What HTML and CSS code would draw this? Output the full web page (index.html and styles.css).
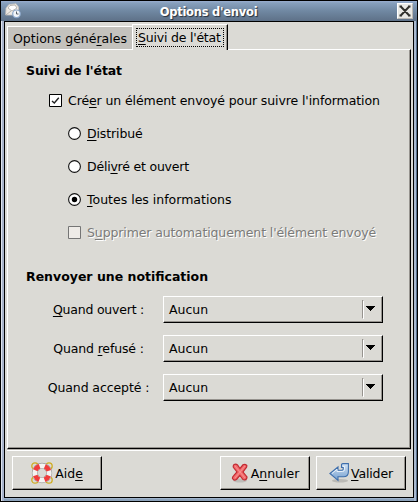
FILE: index.html
```html
<!DOCTYPE html>
<html lang="fr">
<head>
<meta charset="utf-8">
<title>Options d'envoi</title>
<link rel="stylesheet" href="styles.css">
</head>
<body>
<div class="window">
  <header class="titlebar">
    <svg class="app-icon" width="18" height="16" viewBox="0 0 18 16">
      <path d="M1 5 4 1.500 11 .7 13.500 4V12H.7z" fill="#eeeae4" stroke="#c5c3bf" stroke-width=".8"/>
      <path d="M3 5 5 2.500 10 2 12 5 7 8zM1 12 6 8M8 8l3 1" fill="#fff" stroke="#aaa69f" stroke-width=".8"/>
      <circle cx="11.500" cy="10.800" r="3.800" fill="#f4f7fa" stroke="#8ba7ca" stroke-width="1.200"/>
      <path d="M11.500 8.500v2.500h2" fill="none" stroke="#596068"/>
    </svg>
    <h1 class="title">Options d'envoi</h1>
    <button class="close" aria-label="Fermer"><svg width="12" height="12" viewBox="0 0 12 12"><path d="M2 1.800 10 10.200M10 1.800 2 10.200M.5 1.500H3M9 1.500h2.500M.5 10.500H3M9 10.500h2.500" fill="none" stroke="#30302c" stroke-width="2"/></svg></button>
  </header>
  <main class="client">
    <nav class="tabs">
      <div class="tab"><span class="t-general">Options géné<u>r</u>ales</span></div>
      <div class="tab active"><div class="focus"><span class="t-suivi"><u>S</u>uivi de l'état</span></div></div>
    </nav>
    <section class="panel">
      <h2 class="h-suivi">Suivi de l'état</h2>
      <label class="option first"><svg class="mark" width="13" height="13" viewBox="0 0 13 13"><path d="M.5.5h12v12H.5z" fill="#fff" stroke="#000"/><path d="M3 7 5.300 9 9.800 3.800" fill="none" stroke="#222" stroke-width="1.400"/></svg><span class="t-creer">Cré<u>e</u>r un élément envoyé pour suivre l'information</span></label>
      <label class="option"><svg class="mark" width="13" height="13" viewBox="0 0 13 13"><circle cx="6.500" cy="6.500" r="5.900" fill="#fff" stroke="#111" stroke-width="1.100"/></svg><span class="t-dist"><u>D</u>istribué</span></label>
      <label class="option"><svg class="mark" width="13" height="13" viewBox="0 0 13 13"><circle cx="6.500" cy="6.500" r="5.900" fill="#fff" stroke="#111" stroke-width="1.100"/></svg><span class="t-deliv">Déli<u>v</u>ré et ouvert</span></label>
      <label class="option"><svg class="mark" width="13" height="13" viewBox="0 0 13 13"><circle cx="6.500" cy="6.500" r="5.900" fill="#fff" stroke="#111" stroke-width="1.100"/><circle cx="6.500" cy="6.500" r="2.700"/></svg><span class="t-toutes"><u>T</u>outes les informations</span></label>
      <label class="option disabled"><svg class="mark" width="13" height="13" viewBox="0 0 13 13"><path d="M.5.5h12v12H.5z" fill="#eeebe7" stroke="#757575"/></svg><span class="t-suppr">S<u>u</u>pprimer automatiquement l'élément envoyé</span></label>
      <h2 class="h-renv">Renvoyer une notification</h2>
      <div class="fields">
        <span class="name"><span class="t-q1"><u>Q</u>uand ouvert :</span></span>
        <div class="combo"><span>Aucun</span><i class="sep"></i><svg width="9" height="5" viewBox="0 0 9 5" shape-rendering="crispEdges"><path d="M0 0h9v1H8v1H7v1H6v1H5v1H4V4H3V3H2V2H1V1H0z"/></svg></div>
        <span class="name"><span class="t-q2">Quand <u>r</u>efusé :</span></span>
        <div class="combo"><span>Aucun</span><i class="sep"></i><svg width="9" height="5" viewBox="0 0 9 5" shape-rendering="crispEdges"><path d="M0 0h9v1H8v1H7v1H6v1H5v1H4V4H3V3H2V2H1V1H0z"/></svg></div>
        <span class="name"><span class="t-q3">Quand accepté :</span></span>
        <div class="combo"><span>Aucun</span><i class="sep"></i><svg width="9" height="5" viewBox="0 0 9 5" shape-rendering="crispEdges"><path d="M0 0h9v1H8v1H7v1H6v1H5v1H4V4H3V3H2V2H1V1H0z"/></svg></div>
      </div>
    </section>
    <footer class="actions">
      <button class="btn help"><svg width="22" height="22" viewBox="0 0 22 22">
        <g fill="none" stroke="#cfac22" stroke-width="1.300"><circle cx="4" cy="4" r="3.200"/><circle cx="18" cy="4" r="3.200"/><circle cx="4" cy="18" r="3.200"/><circle cx="18" cy="18" r="3.200"/></g>
        <circle cx="11" cy="11" r="7.200" fill="none" stroke="#9a9a98" stroke-width="6"/>
        <circle cx="11" cy="11" r="7.200" fill="none" stroke="#f4f4f2" stroke-width="4.800"/>
        <circle cx="11" cy="11" r="7.200" fill="none" stroke="#f03c3c" stroke-width="4.800" stroke-dasharray="6 5.310" stroke-dashoffset="-2.650"/>
      </svg><span>Aid<u>e</u></span></button>
      <button class="btn cancel"><svg width="18" height="20" viewBox="0 0 18 20">
        <ellipse cx="9" cy="17.500" rx="7" ry="2" fill="#000" opacity=".13"/>
        <path d="M3 1.500Q5 .5 6.500 2L9 5.500 12 1.800Q14 .5 15.800 2.500 16 4 15 5L12 9l4 5q0 2.500-2.500 3L12 16.500 8.800 12.500 5.500 16.500Q3 18 1.500 15.500 1.300 14 2.500 12.800L6 9 2.500 4.500Q1.800 3 3 1.500z" fill="#f26c6e" stroke="#c22a32" stroke-width="1.200"/>
        <path d="M4 3 9 9l5-6M4 15 9 9l5 6" fill="none" stroke="#fa9090" stroke-width="1"/>
      </svg><span>A<u>n</u>nuler</span></button>
      <button class="btn ok"><svg width="21" height="20" viewBox="0 0 21 20">
        <defs><linearGradient id="blue" x2="0" y2="1"><stop offset="0" stop-color="#d5e4f4"/><stop offset="1" stop-color="#749fcf"/></linearGradient></defs>
        <ellipse cx="11" cy="17.800" rx="8" ry="1.800" fill="#000" opacity=".15"/>
        <path d="M12.500 1.500Q13 .6 14 .6h5.400v8.200q0 5-5 5H9v3.500L.9 10.500 9 4v3.200h4q1.200 0 1.200-1.200V4.500h-1.700z" fill="url(#blue)" stroke="#3f6fac" stroke-width="1.100"/>
        <path d="M3 10.500 8 6.300v2.200h5.500q2 0 2-2V3.500H14" fill="none" stroke="#edf5fc" stroke-width=".9"/>
      </svg><span class="t-val"><u>V</u>alider</span></button>
    </footer>
  </main>
</div>
</body>
</html>
```
FILE: styles.css
```css
* { box-sizing: border-box; }
body {
  margin: 0;
  font: 12.5px/17px "DejaVu Sans", sans-serif;
  color: #000;
}
span, h1, h2 { white-space: nowrap; }
u {
  text-decoration: underline;
  text-decoration-thickness: 1px;
  text-underline-offset: 2px;
  text-decoration-skip-ink: none;
}
button { font: inherit; color: inherit; }
.window {
  width: 418px;
  height: 502px;
  border: 1px solid #000;
  background: linear-gradient(90deg, #dfe4ee 0 1px, #a9b4cb 1px 3px, transparent 3px 413px, #a9b9cf 413px 415px, #566f8d 415px), linear-gradient(#a0b4cc 0 498px, #8ca2ba 498px);
  padding: 0 3px 3px;
}
.titlebar {
  display: flex;
  align-items: center;
  height: 20px;
  margin: 0 -3px;
  padding: 0 4px 0 4px;
  background: linear-gradient(#9aaed0 0, #87a0bd 2px, #7088a2 10px, #5e7188 20px);
}
.title {
  flex: 1;
  margin: 0;
  padding-right: 3px;
  padding-top: 1px;
  text-align: center;
  font-size: 11.5px;
  letter-spacing: -.25px;
  line-height: 18px;
  color: #fff;
  text-shadow: 1px 1px 1px #26303c;
}
.close {
  display: grid;
  place-items: center;
  width: 16px;
  height: 16px;
  padding: 0;
  border: 1px solid;
  border-color: #fff #b9b7b2 #b9b7b2 #fff;
  background: #e9e9e5;
}
.client {
  width: 410px;
  height: 477px;
  border: 1px solid #000;
  background: #dbdad5;
  padding: 2px 2px 0;
}
.tabs { display: flex; align-items: flex-end; height: 25px; }
.tab {
  height: 23px;
  width: 125px;
  border: 1px solid #fff;
  border-width: 1px 0 0 1px;
  background: #c4c2bd;
  padding: 3px 5px;
}
.tab.active {
  position: relative;
  width: 96px;
  height: 26px;
  margin-bottom: -1px;
  border-right: 1px solid #000;
  background: #dbdad5;
  box-shadow: inset -1px 0 #96938e;
  padding: 3px;
}
.focus { width: 88px; height: 19px; border: 1px dotted #000; padding-left: 1px; }
.panel {
  width: 404px;
  height: 400px;
  border: 1px solid;
  border-color: #fff #000 #000 #fff;
  box-shadow: inset -1px -1px #96938e, 0 1px #b5b2ad, 0 2px #fff;
  padding: 12px 0 0 18px;
}
h2 { margin: 0; font-size: 12.5px; line-height: 17px; }
.option { display: flex; align-items: center; height: 17px; margin: 16px 0 0 42px; }
.option.first { margin: 13px 0 0 23px; }
.option > span { margin-left: 6px; }
.disabled { color: #7b7b79; text-shadow: 1px 1px #fff; }
.h-renv { margin-top: 27px; }

/* Tracking per label */
.t-suivi, .t-deliv, .t-q1 { letter-spacing: -.21px; }
.t-q2, .t-val { letter-spacing: -.15px; }
.t-dist, .t-suppr, .h-suivi { letter-spacing: -.12px; }
.t-creer, .t-q3 { letter-spacing: -.1px; }

.fields {
  display: grid;
  grid-template-columns: 118px 220px;
  column-gap: 19px;
  row-gap: 12px;
  align-items: center;
  margin-top: 11px;
}
.name { display: flex; justify-content: center; padding-left: 19px; margin-right: -8px; }
.combo {
  display: flex;
  align-items: center;
  height: 27px;
  border: 1px solid;
  border-color: #fff #000 #000 #fff;
  box-shadow: inset -1px -1px #96938e;
  padding: 0 7px 0 5px;
}
.combo span { flex: 1; }
.combo svg { margin-top: -2px; }
.sep { width: 2px; height: 19px; margin-right: 2px; border: 1px solid; border-color: #96938e #fff #fff #96938e; }
.actions { display: flex; height: 34px; margin: 7px 2px 0 5px; }
.btn {
  display: flex;
  align-items: center;
  justify-content: center;
  width: 90px;
  height: 34px;
  border: 1px solid;
  border-color: #fff #000 #000 #fff;
  background: none;
  box-shadow: inset -1px -1px #96938e;
  padding: 0;
}
.btn svg { margin-right: 2px; }
.btn.ok svg { margin-right: 1px; }
.cancel { margin-left: 118px; }
.ok { margin-left: 6px; }
```
